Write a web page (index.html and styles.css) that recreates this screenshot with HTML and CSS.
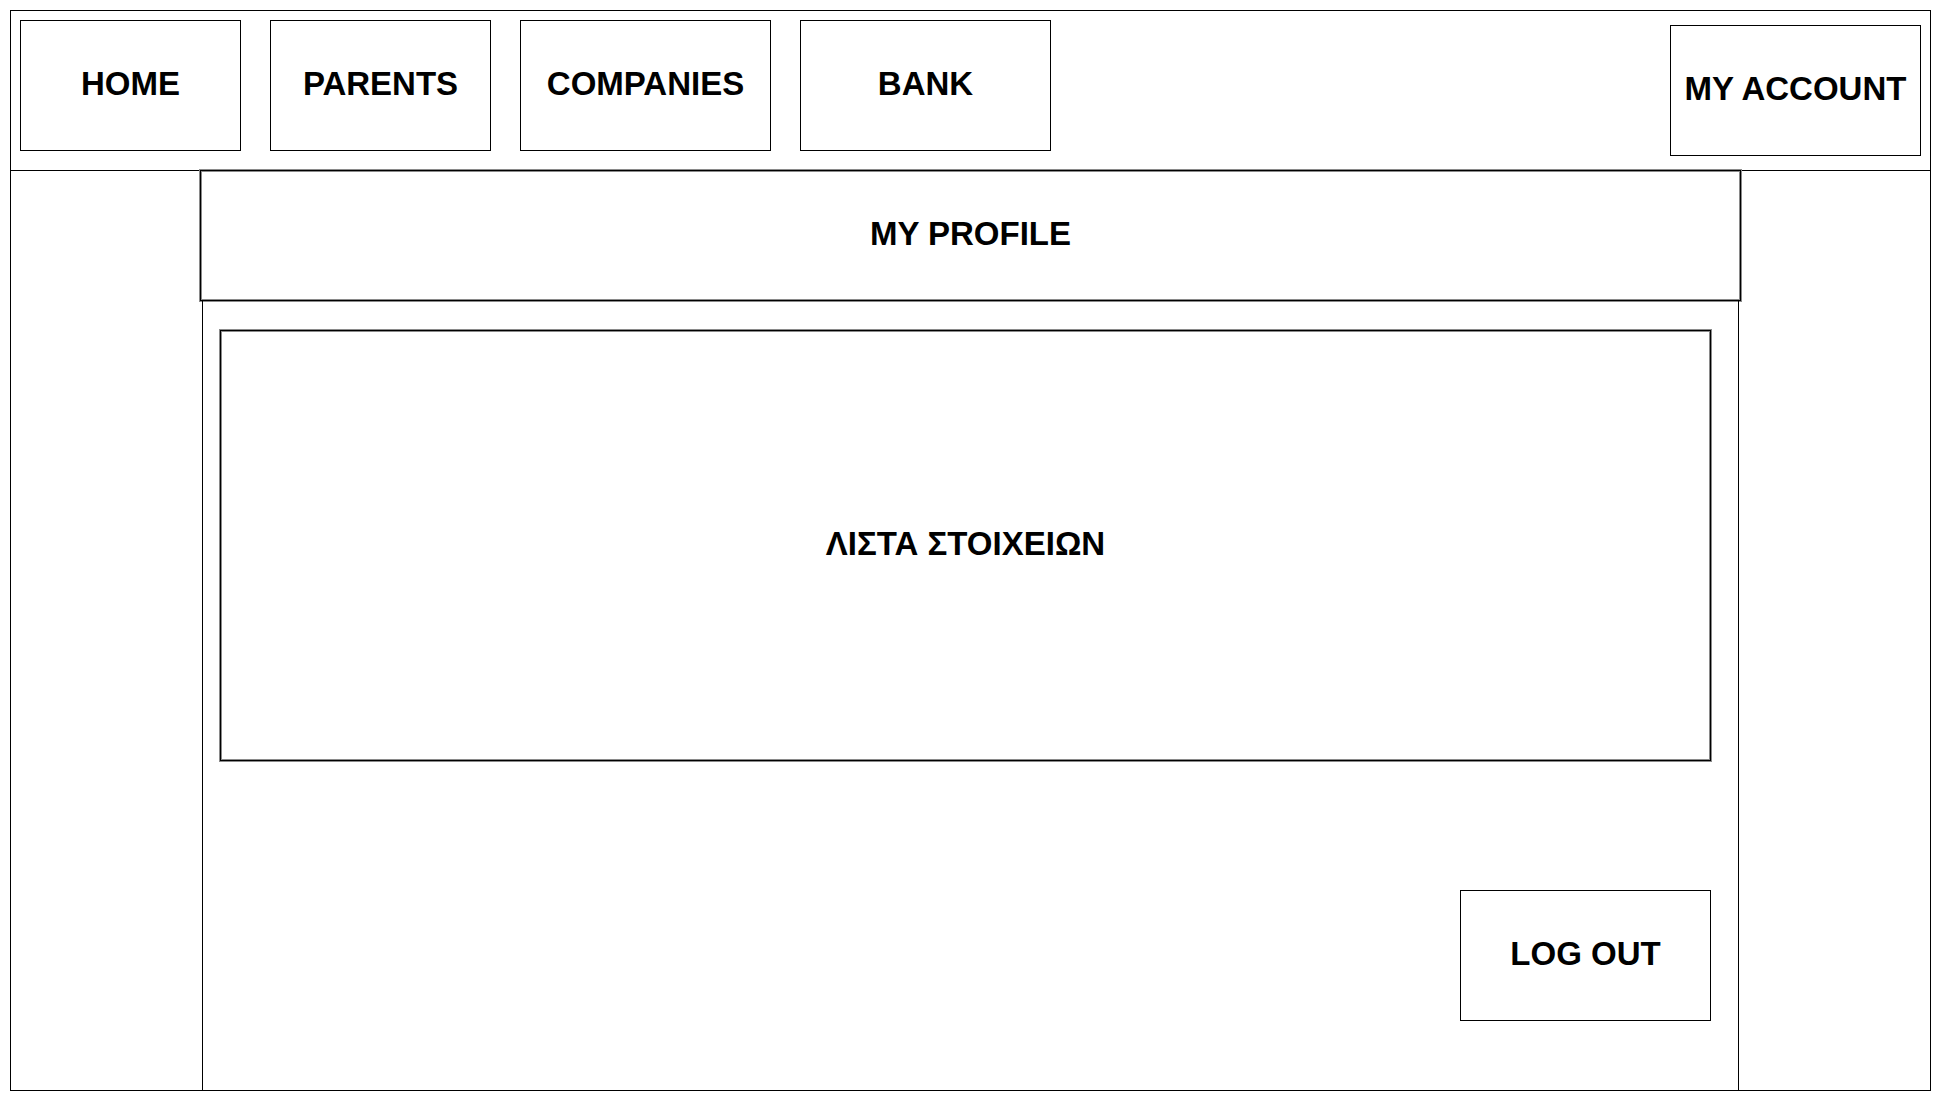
FILE: index.html
```html
<!DOCTYPE html>
<html lang="en">
<head>
<meta charset="utf-8">
<title>My Profile</title>
<link rel="stylesheet" href="styles.css">
</head>
<body>
<div class="frame">
  <header class="header">
    <nav class="nav">
      <div class="box box-sm">HOME</div>
      <div class="box box-sm">PARENTS</div>
      <div class="box box-lg">COMPANIES</div>
      <div class="box box-lg">BANK</div>
    </nav>
    <div class="box box-lg account">MY ACCOUNT</div>
  </header>
  <main class="content">
    <div class="profile">MY PROFILE</div>
    <section class="panel">
      <div class="list">ΛΙΣΤΑ ΣΤΟΙΧΕΙΩΝ</div>
      <div class="box box-lg logout">LOG OUT</div>
    </section>
  </main>
</div>
</body>
</html>
```
FILE: styles.css
```css
* { box-sizing: border-box; }
html, body { margin: 0; padding: 0; background: #fff; }
body {
  font-family: "Liberation Sans", Arial, sans-serif;
  font-weight: bold;
  font-size: 33px;
  color: #000;
}
.frame {
  margin: 10px;
  width: 1921px;
  height: 1081px;
  border: 1px solid #000;
  display: flex;
  flex-direction: column;
}
.header {
  height: 160px;
  flex: none;
  border-bottom: 1px solid #000;
  padding: 9px 9px 0 9px;
  display: flex;
  align-items: flex-start;
}
.nav { display: flex; gap: 29px; }
.box {
  height: 131px;
  border: 1px solid #000;
  padding-bottom: 3px;
  display: flex;
  align-items: center;
  justify-content: center;
  background: #fff;
  white-space: nowrap;
}
.box-sm { width: 221px; }
.box-lg { width: 251px; }
.account { margin-left: auto; margin-top: 5px; }
.content {
  flex: 1;
  margin: -1px 0 0 189px;
  width: 1541px;
  display: flex;
  flex-direction: column;
}
.profile {
  height: 131px;
  flex: none;
  border: 1px solid #000;
  box-shadow: 0 0 0 1px #8a8a8a, inset 0 0 0 1px #8a8a8a;
  background: #fff;
  padding-bottom: 3px;
  display: flex;
  align-items: center;
  justify-content: center;
}
.panel {
  flex: 1;
  margin-left: 2px;
  width: 1537px;
  border-left: 1px solid #000;
  border-right: 1px solid #000;
  padding: 29px 27px 0 17px;
  display: flex;
  flex-direction: column;
}
.list {
  height: 431px;
  border: 1px solid #000;
  box-shadow: 0 0 0 1px #8a8a8a, inset 0 0 0 1px #8a8a8a;
  padding-bottom: 3px;
  display: flex;
  align-items: center;
  justify-content: center;
}
.logout { align-self: flex-end; margin-top: 129px; }
```
